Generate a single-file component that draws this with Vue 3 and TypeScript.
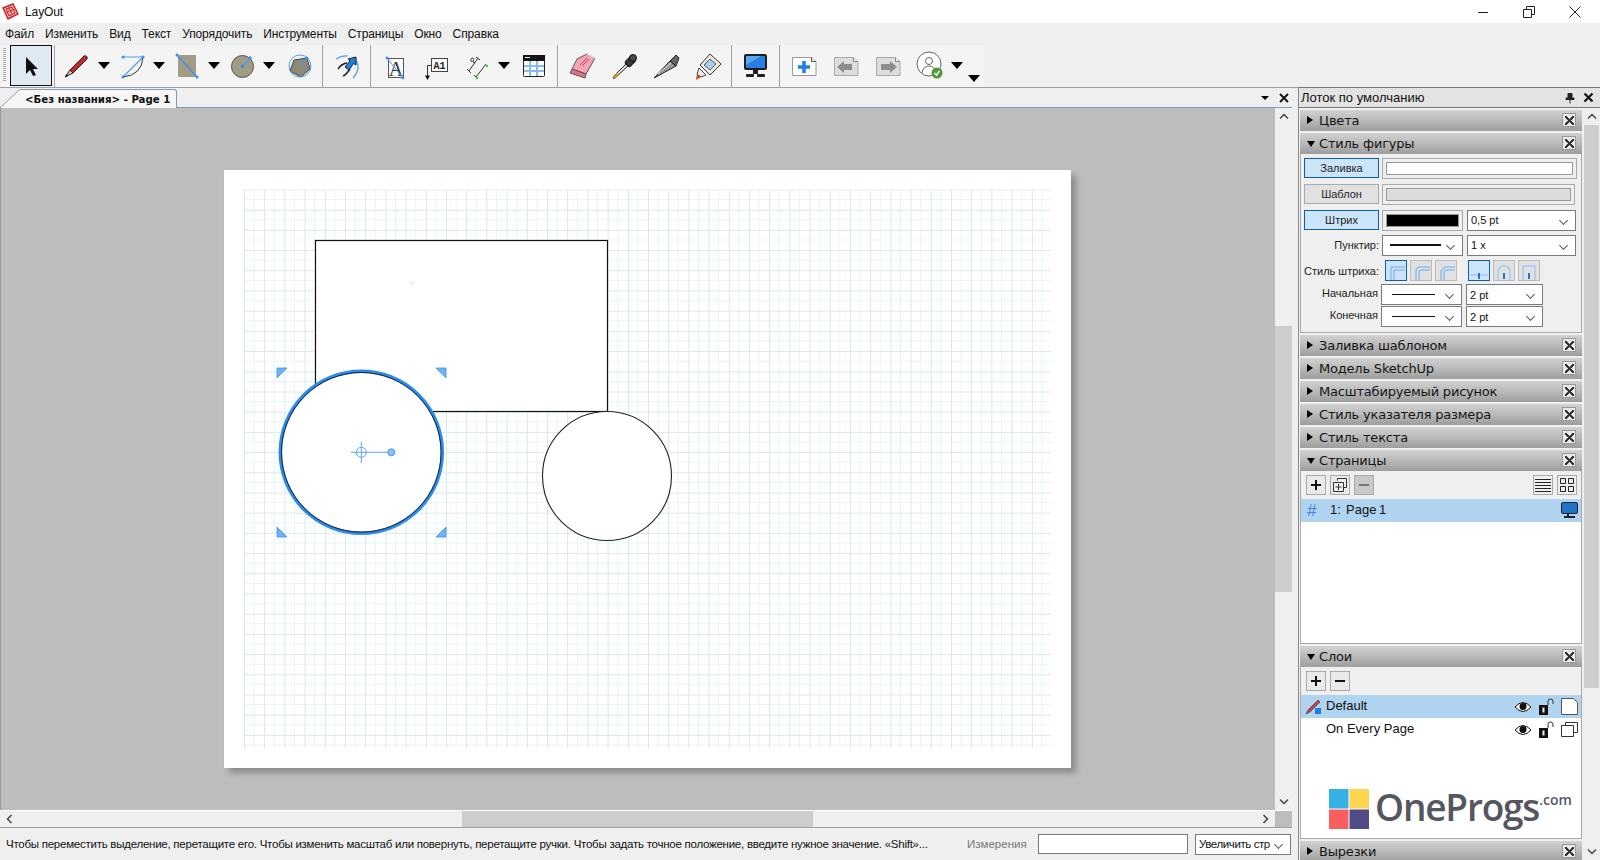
<script setup lang="ts">
const menu = ['Файл', 'Изменить', 'Вид', 'Текст', 'Упорядочить', 'Инструменты', 'Страницы', 'Окно', 'Справка']
const midPanels = ['Заливка шаблоном', 'Модель SketchUp', 'Масштабируемый рисунок', 'Стиль указателя размера', 'Стиль текста']

// stroke join and cap buttons of the shape style panel
const joins = [
  { d: 'M20 7H6V20M20 10H9V20', active: true },
  { d: 'M20 7H10Q6 7 6 11V20M20 10H11Q9 10 9 12V20', active: false },
  { d: 'M20 7H10L6 11V20M20 10H11L9 12V20', active: false },
]
const caps = [
  { d: 'M2 15H20', active: true },
  { d: 'M5 20V12Q5 6 11 6Q17 6 17 12V20', active: false },
  { d: 'M5 20V6H17V20', active: false },
]
// selection handles, in page coordinates
const handles = [
  { id: 'tl', points: '53,198 63,198 53,208' },
  { id: 'tr', points: '212,198 222,198 222,208' },
  { id: 'bl', points: '53,357 53,367 63,367' },
  { id: 'br', points: '222,357 222,367 212,367' },
]
</script>

<template>
  <div class="app">
    <header class="titlebar">
      <svg class="app-icon" width="17" height="17" viewBox="0 0 17 17">
        <path d="M1 5L11 1L16 11L6 16Z" fill="#e9a9a9" stroke="#c5262c" stroke-width="1.4" />
        <path d="M4 6L10 4L13 10L7 13ZM7 4.500L10 11M4.500 9L12 6.500" fill="none" stroke="#c5262c" />
      </svg>
      <span class="app-name">LayOut</span>
      <div class="win-buttons">
        <svg width="12" height="12" viewBox="0 0 12 12"><path d="M1 6.500H11" stroke="#222" /></svg>
        <svg width="12" height="12" viewBox="0 0 12 12"><path d="M.5 3.500H8.500V11.500H.5ZM3.500 3.500V.5H11.500V8.500H8.500" fill="none" stroke="#222" /></svg>
        <svg width="12" height="12" viewBox="0 0 12 12"><path d="M.5 .5L11.500 11.500M11.500 .5L.5 11.500" stroke="#222" /></svg>
      </div>
    </header>

    <nav class="menubar">
      <span v-for="item in menu" :key="item">{{ item }}</span>
    </nav>

    <div class="toolbar-row">
      <div class="toolbar">
        <div class="grip"></div>
        <div class="select-tool">
          <svg width="20" height="24" viewBox="0 0 20 24"><path d="M5 3V20L9 16L12 22L15 21L12 15H17Z" fill="#111" /></svg>
        </div>
        <div class="sep"></div>

        <div class="group draw-group">
          <div class="pair">
            <div class="tool">
              <svg width="32" height="32" viewBox="0 0 32 32">
                <path d="M9 20L23 6C25 5 27 7 26 9L12 23Z" fill="#c8282c" stroke="#222" />
                <path d="M9 20L12 23L4 27Z" fill="#d8c49c" stroke="#222" />
                <path d="M4 27L6 24L7 26Z" fill="#111" />
              </svg>
            </div>
            <span class="drop"></span>
          </div>
          <div class="pair">
            <div class="tool">
              <svg width="32" height="32" viewBox="0 0 32 32">
                <path d="M27 7Q26 25 7 27" fill="none" stroke="#333" />
                <path d="M7 7H27L7 27" fill="none" stroke="#4a9ef0" stroke-width="1.200" />
                <circle cx="7" cy="7" r="1.500" fill="#3a90ee" /><circle cx="27" cy="7" r="1.500" fill="#3a90ee" /><circle cx="7" cy="27" r="1.500" fill="#3a90ee" />
              </svg>
            </div>
            <span class="drop"></span>
          </div>
          <div class="pair">
            <div class="tool">
              <svg width="32" height="32" viewBox="0 0 32 32">
                <rect x="7" y="5" width="18" height="22" rx="1" fill="#a09c86" />
                <path d="M6 5L26 27" stroke="#3a90ee" stroke-width="1.200" />
                <circle cx="6" cy="5" r="1.500" fill="#3a90ee" /><circle cx="26" cy="27" r="1.500" fill="#3a90ee" />
              </svg>
            </div>
            <span class="drop"></span>
          </div>
          <div class="pair">
            <div class="tool">
              <svg width="32" height="32" viewBox="0 0 32 32">
                <circle cx="16.500" cy="16.500" r="11" fill="#a09c86" stroke="#555" />
                <path d="M16.500 16.500L24 8" stroke="#4a9ef0" stroke-width="1.400" />
                <circle cx="16.500" cy="16.500" r="1.700" fill="#3a90ee" /><circle cx="24" cy="8" r="1.700" fill="#3a90ee" />
              </svg>
            </div>
            <span class="drop"></span>
          </div>
          <div class="tool polygon-tool">
            <svg width="32" height="32" viewBox="0 0 32 32">
              <path d="M10 10L23 8L26 19L17 27L6 21Z" fill="#8c8a78" stroke="#444" />
              <circle cx="16" cy="16" r="11" fill="none" stroke="#4a9ef0" />
              <path d="M16 16L23 8" stroke="#4a9ef0" />
              <circle cx="23" cy="8" r="1.500" fill="#3a90ee" />
            </svg>
          </div>
        </div>
        <div class="sep"></div>

        <div class="group rotate-group">
          <div class="tool">
            <svg width="32" height="32" viewBox="0 0 32 32">
              <path d="M5 9Q11 5 17 6M24 9Q31 18 22 28" fill="none" stroke="#4a9ef0" stroke-width="1.200" />
              <path d="M7 19Q10 14 16 13M12 26Q15 25 19 19" fill="none" stroke="#222" stroke-width="1.500" />
              <path d="M14 17L19 11L17 9L25 7L25 15L22.500 13.500L18 20Z" fill="#1f80de" stroke="#123" />
            </svg>
          </div>
        </div>
        <div class="sep"></div>

        <div class="group insert-group">
          <div class="tool">
            <svg width="32" height="32" viewBox="0 0 32 32">
              <rect x="9.500" y="8.500" width="15" height="19" fill="#fafafa" stroke="#555" />
              <text x="17" y="26" text-anchor="middle" class="glyph-a">A</text>
              <path d="M8 8L24 28" stroke="#4a9ef0" />
              <circle cx="8" cy="8" r="1.400" fill="#3a90ee" /><circle cx="24" cy="28" r="1.400" fill="#3a90ee" />
            </svg>
          </div>
          <div class="tool">
            <svg width="32" height="32" viewBox="0 0 32 32">
              <rect x="11.500" y="8.500" width="16" height="13" fill="#fafafa" stroke="#444" />
              <text x="19.500" y="18.500" text-anchor="middle" class="glyph-label">A1</text>
              <path d="M11 15.500H7.500V26" fill="none" stroke="#333" />
              <path d="M5 25.500H10L7.500 30Z" fill="#111" />
            </svg>
          </div>
          <div class="pair">
            <div class="tool">
              <svg width="32" height="32" viewBox="0 0 32 32">
                <path d="M8 21L17 8M15 27L25 14M6 19L10 23M13 25L17 29M15 7L19 10" fill="none" stroke="#333" />
                <path d="M11 12Q8 9 11 8Q14 8 12 11Q11 12 14 13" fill="none" stroke="#333" />
                <circle cx="26" cy="16" r="1.200" fill="#4fc04f" /><circle cx="16" cy="28" r="1.200" fill="#4fc04f" />
              </svg>
            </div>
            <span class="drop"></span>
          </div>
          <div class="tool table-tool">
            <svg width="24" height="24" viewBox="0 0 24 24">
              <rect x="1.500" y="1.500" width="21" height="21" rx="1" fill="#fff" stroke="#222" />
              <rect x="1" y="1" width="22" height="6" fill="#151515" />
              <rect x="3" y="3" width="5" height="1" fill="#fff" />
              <path d="M8 7V22M15 7V22M2 12H22M2 17H22" stroke="#8ab8f2" stroke-width="2" />
            </svg>
          </div>
        </div>
        <div class="sep"></div>

        <div class="group modify-group">
          <div class="tool">
            <svg width="32" height="32" viewBox="0 0 32 32">
              <path d="M11 9L21 4L29 8L20 24L6 19Z" fill="#f7a3b6" stroke="#555" />
              <path d="M6 19L20 24L19 28L4 23Z" fill="#e4708c" stroke="#555" />
              <path d="M21 4L29 8" stroke="#fff" />
              <path d="M14 15L21 8M16 16L23 9" stroke="#a55" />
            </svg>
          </div>
          <div class="tool">
            <svg width="32" height="32" viewBox="0 0 32 32">
              <path d="M20 12L5 27L6 29L22 14" fill="#e8e2cc" stroke="#222" />
              <path d="M5 27L9 23L10 25L6 29Z" fill="#e3a41d" />
              <rect x="19" y="6" width="7" height="10" rx="2" transform="rotate(45 22 11)" fill="#3a3a38" stroke="#111" />
              <circle cx="25" cy="8" r="3.500" fill="#4a4a46" stroke="#111" />
            </svg>
          </div>
          <div class="tool">
            <svg width="32" height="32" viewBox="0 0 32 32">
              <path d="M4 28L20 11L26 16Z" fill="#999" stroke="#222" />
              <path d="M20 11L26 5L29 8L26 16Z" fill="#666" stroke="#222" />
              <path d="M8 24L21 13" stroke="#ddd" />
            </svg>
          </div>
          <div class="tool">
            <svg width="32" height="32" viewBox="0 0 32 32">
              <path d="M18 4L29 14L18 25L8 15Z" fill="#f1ecd9" stroke="#333" />
              <path d="M18 9L24 14L18 20L12 15Z" fill="#a6cdec" stroke="#557" />
              <path d="M7 18L14 25L9 27L5 24Z" fill="#eee" stroke="#444" />
              <path d="M5 24L9 27L4 30Z" fill="#d9401f" />
            </svg>
          </div>
        </div>
        <div class="sep"></div>

        <div class="group present-group">
          <div class="tool">
            <svg width="26" height="26" viewBox="0 0 26 26">
              <rect x="1" y="1" width="23" height="16" rx="2" fill="#1f1f1f" />
              <rect x="3" y="3" width="19" height="12" fill="#2a7ee0" />
              <path d="M3 3H18L3 12Z" fill="#5ea7f0" />
              <rect x="10" y="17" width="5" height="4" fill="#1f1f1f" />
              <rect x="3" y="21" width="8" height="3" rx="1" fill="#1f1f1f" /><rect x="14" y="21" width="8" height="3" rx="1" fill="#1f1f1f" />
            </svg>
          </div>
        </div>
        <div class="sep"></div>

        <div class="group page-group">
          <div class="tool">
            <svg width="28" height="24" viewBox="0 0 28 24">
              <path d="M2.500 3.500H21.500L26 7.500V21.500H2.500Z" fill="#fff" stroke="#999" />
              <path d="M21.500 3.500V7.500H26" fill="#eee" stroke="#555" />
              <path d="M14 7V19M8 13H20" stroke="#1d7fe0" stroke-width="3.500" />
            </svg>
          </div>
          <div class="tool">
            <svg width="28" height="24" viewBox="0 0 28 24">
              <path d="M2.500 3.500H21.500L26 7.500V21.500H2.500Z" fill="#ddd" stroke="#aaa" />
              <path d="M21.500 3.500V7.500H26" fill="#eee" stroke="#888" />
              <path d="M5 13L12 7V10H20V16H12V19Z" fill="#8d8d8d" />
            </svg>
          </div>
          <div class="tool">
            <svg width="28" height="24" viewBox="0 0 28 24">
              <path d="M2.500 3.500H21.500L26 7.500V21.500H2.500Z" fill="#ddd" stroke="#aaa" />
              <path d="M21.500 3.500V7.500H26" fill="#eee" stroke="#888" />
              <path d="M23 13L16 7V10H7V16H16V19Z" fill="#8d8d8d" />
            </svg>
          </div>
          <div class="pair user-pair">
            <div class="tool">
              <svg width="32" height="32" viewBox="0 0 32 32">
                <circle cx="15" cy="14" r="12" fill="#fff" stroke="#666" />
                <circle cx="15" cy="11" r="3.500" fill="#fff" stroke="#666" />
                <path d="M8 23Q9 16 15 16Q21 16 22 23" fill="none" stroke="#666" />
                <circle cx="23" cy="23" r="5.500" fill="#4f9a36" />
                <path d="M20.500 23L22.500 25L25.500 21" fill="none" stroke="#fff" stroke-width="1.500" />
              </svg>
            </div>
            <span class="drop"></span>
          </div>
          <span class="drop overflow-drop"></span>
        </div>
      </div>
    </div>

    <main class="main">
      <section class="workspace">
        <div class="tabs">
          <div class="tab">
            <svg class="tab-slant" width="22" height="19" viewBox="0 0 22 19"><path d="M0 19L19 1Q20 .5 22 .5V19Z" fill="#f6f6f6" /><path d="M0 19L19 1Q20 .5 22 .5" fill="none" stroke="#7f9db9" /></svg>
            <span class="tab-label">&lt;Без названия&gt; - Page 1</span>
          </div>
          <div class="tab-controls">
            <span class="tri-small"></span>
            <svg width="10" height="10" viewBox="0 0 10 10"><path d="M1 1L9 9M9 1L1 9" stroke="#111" stroke-width="1.800" /></svg>
          </div>
        </div>

        <div class="view-row">
          <div class="canvas">
            <div class="page">
              <svg width="847" height="598" viewBox="0 0 847 598">
                <defs>
                  <pattern id="grid" x="20" y="19.500" width="20.200" height="20.200" patternUnits="userSpaceOnUse">
                    <path d="M10.100 0V20.200M0 10.100H20.200" stroke="#e6f5f6" stroke-width="1" />
                    <path d="M.5 0V20.200M0 .5H20.200" stroke="#d9e8e8" stroke-width="1" />
                  </pattern>
                </defs>
                <rect x="20" y="19.500" width="807" height="559" fill="url(#grid)" />
                <rect x="91.500" y="70.500" width="292" height="171" fill="#fff" stroke="#111" stroke-width="1.200" />
                <path d="M186 112L190 115M190 112L186 115" stroke="#e4e4e4" />
                <circle cx="383" cy="306" r="64.500" fill="#fff" stroke="#222" stroke-width="1.100" />
                <circle cx="137.300" cy="282.300" r="81" fill="#fff" stroke="#2a8cf0" stroke-width="3.500" />
                <circle cx="137.300" cy="282.300" r="79.800" fill="none" stroke="#222" stroke-width="1" />
                <polygon v-for="h in handles" :key="h.id" :points="h.points" fill="#6fb2f5" stroke="#3d93ec" stroke-width=".8" />
                <g fill="none" stroke="#5da5ee">
                  <circle cx="137.300" cy="282.300" r="5" />
                  <path d="M127 282.300H167M137.300 272V293" />
                </g>
                <circle cx="167.300" cy="282.300" r="3.500" fill="#8cc0f5" stroke="#4a9aec" />
              </svg>
            </div>
          </div>
          <div class="vscroll">
            <svg class="arrow" width="10" height="7" viewBox="0 0 10 7"><path d="M1 5.500L5 1.500L9 5.500" fill="none" stroke="#444" stroke-width="1.500" /></svg>
            <div class="vtrack"><div class="vthumb"></div></div>
            <svg class="arrow" width="10" height="7" viewBox="0 0 10 7"><path d="M1 1.500L5 5.500L9 1.500" fill="none" stroke="#444" stroke-width="1.500" /></svg>
          </div>
        </div>

        <div class="hscroll-row">
          <div class="hscroll">
            <svg width="7" height="10" viewBox="0 0 7 10"><path d="M5.500 1L1.500 5L5.500 9" fill="none" stroke="#444" stroke-width="1.500" /></svg>
            <div class="htrack"><div class="hthumb"></div></div>
            <svg width="7" height="10" viewBox="0 0 7 10"><path d="M1.500 1L5.500 5L1.500 9" fill="none" stroke="#444" stroke-width="1.500" /></svg>
          </div>
          <div class="scroll-corner"></div>
        </div>

        <footer class="statusbar">
          <span class="hint">Чтобы переместить выделение, перетащите его. Чтобы изменить масштаб или повернуть, перетащите ручки. Чтобы задать точное положение, введите нужное значение. «Shift»...</span>
          <span class="measure-label">Измерения</span>
          <div class="measure-input"></div>
          <div class="combo zoom-combo"><span>Увеличить стр</span></div>
        </footer>
      </section>

      <aside class="tray">
        <div class="tray-title">
          <span>Лоток по умолчанию</span>
          <svg width="10" height="12" viewBox="0 0 10 12"><path d="M3 1.500H7V6H9V7.500H1V6H3ZM5 7.500V11.500" fill="#222" stroke="#222" /></svg>
          <svg width="11" height="11" viewBox="0 0 11 11"><path d="M1.500 1.500L9.500 9.500M9.500 1.500L1.500 9.500" stroke="#111" stroke-width="2.200" /></svg>
        </div>

        <div class="tray-body">
          <div class="panels">
            <div class="panel-head closed"><span class="panel-name">Цвета</span><span class="panel-x"></span></div>

            <div class="panel">
              <div class="panel-head open"><span class="panel-name">Стиль фигуры</span><span class="panel-x"></span></div>
              <div class="shape-style">
                <div class="row">
                  <button class="swatch-btn on">Заливка</button>
                  <div class="well fill-well"><div class="well-fill white"></div></div>
                </div>
                <div class="row">
                  <button class="swatch-btn">Шаблон</button>
                  <div class="well pattern-well"><div class="well-fill grey"></div></div>
                </div>
                <div class="row">
                  <button class="swatch-btn on">Штрих</button>
                  <div class="well stroke-well"><div class="well-fill black"></div></div>
                  <div class="combo wide"><span>0,5 pt</span></div>
                </div>
                <div class="row">
                  <label class="row-label">Пунктир:</label>
                  <div class="combo line-combo"><i class="line thick"></i></div>
                  <div class="combo wide"><span>1 x</span></div>
                </div>
                <div class="row stroke-row">
                  <label class="row-label">Стиль штриха:</label>
                  <div class="stroke-buttons">
                    <span v-for="j in joins" :key="j.d" class="stroke-btn" :class="{ on: j.active }">
                      <svg width="22" height="21" viewBox="0 0 22 21"><path :d="j.d" fill="none" stroke="#8fbdf0" stroke-width="1.500" /></svg>
                    </span>
                  </div>
                  <div class="stroke-buttons caps">
                    <span v-for="c in caps" :key="c.d" class="stroke-btn" :class="{ on: c.active }">
                      <svg width="22" height="21" viewBox="0 0 22 21">
                        <path :d="c.d" fill="none" stroke="#a8c8ee" stroke-width="1.500" />
                        <path d="M11 13V19" stroke="#2a6fc8" stroke-width="2" />
                      </svg>
                    </span>
                  </div>
                </div>
                <div class="row end-row">
                  <label class="row-label">Начальная</label>
                  <div class="combo line-combo"><i class="line"></i></div>
                  <div class="combo small"><span>2 pt</span></div>
                </div>
                <div class="row end-row">
                  <label class="row-label">Конечная</label>
                  <div class="combo line-combo"><i class="line"></i></div>
                  <div class="combo small"><span>2 pt</span></div>
                </div>
              </div>
            </div>

            <div v-for="name in midPanels" :key="name" class="panel-head closed">
              <span class="panel-name">{{ name }}</span><span class="panel-x"></span>
            </div>

            <div class="panel pages-panel">
              <div class="panel-head open"><span class="panel-name">Страницы</span><span class="panel-x"></span></div>
              <div class="mini-bar">
                <span class="mini-btn"><svg width="12" height="12" viewBox="0 0 12 12"><path d="M6 1V11M1 6H11" stroke="#111" stroke-width="2" /></svg></span>
                <span class="mini-btn"><svg width="16" height="16" viewBox="0 0 16 16"><path d="M5.500 3.500V1.500H14.500V10.500H11.500M1.500 5.500H11.500V14.500H1.500Z" fill="#eee" stroke="#333" /><path d="M6.500 7V13M3.500 10H9.500" stroke="#333" /></svg></span>
                <span class="mini-btn off"><svg width="12" height="12" viewBox="0 0 12 12"><path d="M1 6H11" stroke="#777" stroke-width="2" /></svg></span>
                <span class="spacer"></span>
                <span class="mini-btn plain"><svg width="16" height="15" viewBox="0 0 16 15"><path d="M0 1.500H16M0 4.500H16M0 7.500H16M0 10.500H16M0 13.500H16" stroke="#222" /></svg></span>
                <span class="mini-btn plain"><svg width="16" height="16" viewBox="0 0 16 16"><path d="M1.500 1.500H6.500V6.500H1.500ZM9.500 1.500H14.500V6.500H9.500ZM1.500 9.500H6.500V14.500H1.500ZM9.500 9.500H14.500V14.500H9.500Z" fill="none" stroke="#222" /></svg></span>
              </div>
              <div class="list pages-list">
                <div class="list-row selected">
                  <span class="hash">#</span>
                  <span class="page-label">1:&nbsp; Page 1</span>
                  <svg class="row-monitor" width="17" height="17" viewBox="0 0 17 17">
                    <rect x=".5" y=".5" width="16" height="11" rx="1.500" fill="#1e74c8" stroke="#222" />
                    <path d="M7 12V14M3 15H14" stroke="#222" stroke-width="2" />
                  </svg>
                </div>
              </div>
            </div>

            <div class="panel layers-panel">
              <div class="panel-head open"><span class="panel-name">Слои</span><span class="panel-x"></span></div>
              <div class="mini-bar">
                <span class="mini-btn"><svg width="12" height="12" viewBox="0 0 12 12"><path d="M6 1V11M1 6H11" stroke="#111" stroke-width="2" /></svg></span>
                <span class="mini-btn"><svg width="12" height="12" viewBox="0 0 12 12"><path d="M1 6H11" stroke="#111" stroke-width="2" /></svg></span>
              </div>
              <div class="list layers-list">
                <div class="list-row selected layer">
                  <svg class="layer-pen" width="18" height="16" viewBox="0 0 18 16">
                    <path d="M1 15L3 11L13 1L15 3L5 13Z" fill="#c5433f" stroke="#444" stroke-width=".7" />
                    <rect x="10" y="9" width="6" height="6" fill="#1f7fe8" />
                  </svg>
                  <span class="layer-name">Default</span>
                  <svg class="eye" width="18" height="12" viewBox="0 0 18 12"><path d="M1 6Q9 -3 17 6Q9 15 1 6Z" fill="#fff" stroke="#111" /><circle cx="9" cy="5.500" r="3.500" fill="#111" /></svg>
                  <svg class="lock" width="16" height="18" viewBox="0 0 16 18"><rect x="0" y="7" width="9" height="10" fill="#111" /><rect x="3.500" y="9.500" width="2" height="5" fill="#eee" /><path d="M9 7V3Q9 1 11.500 1Q14 1 14 3V6" fill="none" stroke="#333" /></svg>
                  <svg class="layer-page" width="17" height="17" viewBox="0 0 17 17"><path d="M.5 .5H12.500L16.500 4.500V16.500H.5Z" fill="#fff" stroke="#555" /></svg>
                </div>
                <div class="list-row layer">
                  <span class="layer-pen"></span>
                  <span class="layer-name">On Every Page</span>
                  <svg class="eye" width="18" height="12" viewBox="0 0 18 12"><path d="M1 6Q9 -3 17 6Q9 15 1 6Z" fill="#fff" stroke="#111" /><circle cx="9" cy="5.500" r="3.500" fill="#111" /></svg>
                  <svg class="lock" width="16" height="18" viewBox="0 0 16 18"><rect x="0" y="7" width="9" height="10" fill="#111" /><rect x="3.500" y="9.500" width="2" height="5" fill="#eee" /><path d="M9 7V3Q9 1 11.500 1Q14 1 14 3V6" fill="none" stroke="#333" /></svg>
                  <svg class="layer-page" width="17" height="15" viewBox="0 0 17 15"><path d="M4.500 3.500V.5H16.500V10.500H12.500M.5 3.500H12.500V14.500H.5Z" fill="#fff" stroke="#333" /></svg>
                </div>
                <div class="watermark">
                  <svg width="40" height="40" viewBox="0 0 40 40">
                    <rect width="19.500" height="19.500" fill="#35b1e6" />
                    <rect x="20.500" width="19.500" height="19.500" fill="#fdd54e" />
                    <rect y="20.500" width="19.500" height="19.500" fill="#fa5f5f" />
                    <rect x="20.500" y="20.500" width="19.500" height="19.500" fill="#4f4c86" />
                  </svg>
                  <span class="wm-name">OneProgs</span><span class="wm-com">.com</span>
                </div>
              </div>
            </div>

            <div class="panel-head closed"><span class="panel-name">Вырезки</span><span class="panel-x"></span></div>
          </div>

          <div class="tray-scroll">
            <svg class="arrow" width="10" height="7" viewBox="0 0 10 7"><path d="M1 5.500L5 1.500L9 5.500" fill="none" stroke="#444" stroke-width="1.500" /></svg>
            <div class="tray-track"><div class="tray-thumb"></div></div>
            <svg class="arrow" width="10" height="7" viewBox="0 0 10 7"><path d="M1 1.500L5 5.500L9 1.500" fill="none" stroke="#444" stroke-width="1.500" /></svg>
          </div>
        </div>
      </aside>
    </main>
  </div>
</template>

<style>
html,
body {
  margin: 0;
  overflow: hidden;
}
</style>

<style scoped>
.app {
  width: 1600px;
  height: 860px;
  display: flex;
  flex-direction: column;
  overflow: hidden;
  background: #efefef;
  color: #111;
  font-family: "Liberation Sans", "Noto Sans", sans-serif;
  font-size: 12px;
}

/* Title bar */
.titlebar {
  height: 23px;
  flex: none;
  display: flex;
  align-items: center;
  background: #fff;
}

.app-icon {
  margin-left: 2px;
}

.app-name {
  margin-left: 6px;
  letter-spacing: -0.1px;
}

.win-buttons {
  margin-left: auto;
  display: flex;
  gap: 34px;
  padding-right: 19px;
}

/* Menu */
.menubar {
  height: 22px;
  flex: none;
  display: flex;
  align-items: center;
  gap: 11px;
  padding-left: 5px;
  letter-spacing: -0.12px;
}

/* Toolbar */
.toolbar-row {
  height: 43px;
  flex: none;
  border-bottom: 1px solid #a0a0a0;
  box-sizing: border-box;
}

.toolbar {
  width: 984px;
  height: 42px;
  display: flex;
  background: #f4f4f4;
}

.grip {
  width: 3px;
  height: 34px;
  margin: 3px 0 0 3px;
  background: repeating-linear-gradient(#aaa 0 1px, transparent 1px 2px);
}

.select-tool {
  width: 40px;
  height: 39px;
  margin-left: 4px;
  display: flex;
  align-items: center;
  justify-content: center;
  border: 1px solid #111;
  background: #dfe9f3;
}

.sep {
  width: 1px;
  flex: none;
  margin-left: 2px;
  background: #a3a3a3;
}

.group {
  display: flex;
  align-items: center;
  height: 41px;
}

.tool {
  width: 36px;
  height: 41px;
  flex: none;
  display: flex;
  align-items: center;
  justify-content: center;
}

.glyph-a {
  font-family: "Liberation Serif", serif;
  font-size: 20px;
  fill: #333;
}

.glyph-label {
  font-family: "Liberation Mono", monospace;
  font-size: 10px;
  font-weight: 700;
  fill: #222;
}

.pair {
  display: flex;
  align-items: center;
}

.drop {
  width: 18px;
  height: 7px;
  flex: none;
  position: relative;
}

.drop::after {
  content: "";
  position: absolute;
  left: 3px;
  top: 0;
  border-left: 6px solid transparent;
  border-right: 6px solid transparent;
  border-top: 7px solid #000;
}

.draw-group {
  width: 266px;
  padding-left: 4px;
  gap: 1px;
  box-sizing: border-box;
}

.polygon-tool {
  margin-left: 3px;
}

.draw-group + .sep {
  margin-left: 1px;
}

.rotate-group {
  width: 47px;
  justify-content: center;
}

.rotate-group + .sep,
.insert-group + .sep,
.modify-group + .sep,
.present-group + .sep {
  margin-left: 0;
}

.insert-group {
  width: 186px;
  padding-left: 6px;
  gap: 5px;
  box-sizing: border-box;
}

.table-tool {
  margin-left: -2px;
}

.modify-group {
  width: 173px;
  padding-left: 6px;
  gap: 6px;
  box-sizing: border-box;
}

.present-group {
  width: 47px;
  justify-content: center;
}

.page-group {
  width: 204px;
  padding-left: 6px;
  gap: 6px;
  box-sizing: border-box;
  position: relative;
}

.overflow-drop {
  position: absolute;
  left: 185px;
  top: 30px;
}

/* Main area */
.main {
  flex: 1;
  min-height: 0;
  display: flex;
}

.workspace {
  width: 1292px;
  flex: none;
  display: flex;
  flex-direction: column;
}

.tabs {
  height: 20px;
  flex: none;
  display: flex;
  align-items: flex-end;
  border-bottom: 1px solid #7f9db9;
  box-sizing: border-box;
}

.tab {
  height: 19px;
  margin-bottom: -1px;
  display: flex;
  align-items: center;
}

.tab-slant {
  display: block;
  flex: none;
}

.tab-label {
  height: 19px;
  padding: 1px 6px 0 3px;
  display: flex;
  align-items: center;
  border: 1px solid #7f9db9;
  border-left: none;
  border-bottom: none;
  border-radius: 0 3px 0 0;
  background: #f6f6f6;
  font-family: "DejaVu Sans", sans-serif;
  font-size: 10.200px;
  font-weight: 700;
  box-sizing: border-box;
}

.tab-controls {
  margin-left: auto;
  margin-right: 3px;
  height: 19px;
  display: flex;
  align-items: center;
  gap: 10px;
}

.tri-small {
  border-left: 4px solid transparent;
  border-right: 4px solid transparent;
  border-top: 4px solid #000;
}

.view-row {
  flex: 1;
  min-height: 0;
  display: flex;
}

.canvas {
  flex: 1;
  min-width: 0;
  padding: 62px 0 0 223px;
  background: #bdbdbd;
  border-left: 1px solid #9a9a9a;
  box-sizing: border-box;
}

.page {
  width: 847px;
  height: 598px;
  background: #fff;
  box-shadow: 5px 5px 6px #8c8c8c;
}

.page svg {
  display: block;
}

.vscroll {
  width: 17px;
  flex: none;
  display: flex;
  flex-direction: column;
  align-items: center;
  background: #efefef;
}

.arrow {
  flex: none;
  margin: 5px 0;
}

.vtrack {
  flex: 1;
  width: 100%;
  padding-top: 201px;
  box-sizing: border-box;
}

.vthumb {
  height: 266px;
  background: #cdcdcd;
}

.hscroll-row {
  height: 18px;
  flex: none;
  display: flex;
  border-top: 1px solid #fff;
  border-bottom: 1px solid #a0a0a0;
  box-sizing: border-box;
}

.hscroll {
  flex: 1;
  display: flex;
  align-items: center;
  padding: 0 6px;
  background: #efefef;
}

.htrack {
  flex: 1;
  height: 100%;
  padding-left: 449px;
  box-sizing: border-box;
}

.hthumb {
  width: 351px;
  height: 100%;
  background: #cdcdcd;
}

.scroll-corner {
  width: 17px;
  background: #bdbdbd;
}

.statusbar {
  height: 32px;
  flex: none;
  display: flex;
  align-items: center;
  padding-left: 6px;
  white-space: nowrap;
}

.hint {
  width: 961px;
  flex: none;
  font-size: 11.500px;
  letter-spacing: -0.25px;
}

.measure-label {
  width: 71px;
  flex: none;
  font-size: 11.500px;
  color: #777;
}

.measure-input {
  width: 150px;
  height: 20px;
  flex: none;
  background: #fff;
  border: 1px solid #777;
  box-sizing: border-box;
}

/* Combos */
.combo {
  height: 21px;
  flex: none;
  position: relative;
  display: flex;
  align-items: center;
  padding-left: 3px;
  background: #fff;
  border: 1px solid #7a7a7a;
  box-sizing: border-box;
  font-size: 11px;
}

.combo::after {
  content: "";
  position: absolute;
  right: 8px;
  top: 6px;
  width: 6px;
  height: 6px;
  border-right: 1px solid #555;
  border-bottom: 1px solid #555;
  transform: rotate(45deg) scale(.9);
}

.zoom-combo {
  width: 96px;
  margin-left: 7px;
  font-size: 11.500px;
  letter-spacing: -0.4px;
}

.wide {
  width: 109px;
}

.small {
  width: 77px;
}

.line-combo {
  width: 81px;
}

.line {
  display: block;
  width: 43px;
  height: 1px;
  margin-left: 7px;
  background: #111;
}

.line.thick {
  width: 51px;
  height: 2px;
  margin-left: 4px;
}

/* Tray */
.tray {
  width: 302px;
  flex: none;
  margin: -1px 0 0 6px;
  display: flex;
  flex-direction: column;
  border-left: 1px solid #888;
  box-sizing: border-box;
}

.tray-title {
  height: 19px;
  flex: none;
  display: flex;
  align-items: center;
  gap: 8px;
  padding: 0 6px 0 2px;
  background: #e3e3e3;
  border-top: 1px solid #777;
  border-bottom: 1px solid #777;
  font-size: 13px;
}

.tray-title span {
  flex: 1;
}

.tray-body {
  flex: 1;
  min-height: 0;
  display: flex;
  overflow: hidden;
}

.panels {
  width: 283px;
  flex: none;
  padding: 2px 0 0 1px;
  box-sizing: border-box;
  display: flex;
  flex-direction: column;
  gap: 2px;
  margin-right: 2px;
}

.panel {
  border: 1px solid #aaa;
  border-top: none;
  box-sizing: border-box;
}

.panel-head {
  height: 21px;
  flex: none;
  position: relative;
  display: flex;
  align-items: center;
  padding-left: 19px;
  background: linear-gradient(#d2d2d2, #b9b9b9 50%, #9d9d9d);
  box-sizing: border-box;
}

.panel > .panel-head {
  margin: 0 -1px;
}

.panel-head::before {
  content: "";
  position: absolute;
  left: 7px;
  top: 6px;
}

.closed::before {
  border-top: 4px solid transparent;
  border-bottom: 4px solid transparent;
  border-left: 6px solid #000;
}

.open::before {
  top: 8px;
  border-left: 4px solid transparent;
  border-right: 4px solid transparent;
  border-top: 6px solid #000;
}

.panel-name {
  font-family: "DejaVu Sans", sans-serif;
  font-size: 13px;
  letter-spacing: -0.2px;
  color: #151515;
}

.panel-x {
  position: absolute;
  right: 6px;
  top: 3px;
  width: 14px;
  height: 14px;
  background-color: #e8e8e8;
  background-image: linear-gradient(45deg, transparent 44%, #333 44% 56%, transparent 56%), linear-gradient(-45deg, transparent 44%, #333 44% 56%, transparent 56%);
  background-size: 9px 9px;
  background-position: center;
  background-repeat: no-repeat;
  border: 1px solid #999;
  box-sizing: border-box;
}

/* Shape style panel */
.shape-style {
  height: 178px;
  padding: 4px 0 0 3px;
  box-sizing: border-box;
  background: #efefef;
  display: flex;
  flex-direction: column;
}

.row {
  height: 20px;
  flex: none;
  display: flex;
  align-items: center;
  gap: 3px;
  margin-top: 5px;
}

.row:first-child {
  margin-top: 0;
}

.row:nth-child(2),
.row:nth-child(3) {
  margin-top: 6px;
}

.swatch-btn {
  width: 75px;
  height: 20px;
  padding: 0;
  flex: none;
  border: 1px solid #aaa;
  background: #e1e1e1;
  color: #222;
  font: inherit;
  font-size: 11px;
}

.swatch-btn.on {
  border-color: #0f5f9e;
  background: #cce4f7;
}

.well {
  height: 21px;
  padding: 3px;
  flex: none;
  border: 1px solid #aaa;
  box-sizing: border-box;
}

.fill-well {
  width: 195px;
}

.pattern-well {
  width: 193px;
}

.stroke-well {
  width: 81px;
}

.well + .combo {
  margin-left: 1px;
}

.well-fill {
  height: 100%;
  border: 1px solid #999;
  box-sizing: border-box;
}

.white {
  background: #fff;
}

.grey {
  background: #dcdcdc;
}

.black {
  background: #000;
}

.row-label {
  width: 75px;
  flex: none;
  text-align: right;
  font-size: 11px;
  color: #222;
  white-space: nowrap;
}

.line-combo + .combo {
  margin-left: 1px;
}

.stroke-row {
  height: 21px;
}

.stroke-buttons {
  display: flex;
  gap: 3px;
  margin-left: 3px;
}

.stroke-buttons.caps {
  margin-left: 8px;
}

.stroke-btn {
  width: 22px;
  height: 21px;
  border: 1px solid #bbb;
  background: #e1e1e1;
  box-sizing: border-box;
  overflow: hidden;
}

.stroke-btn svg {
  display: block;
  margin: -1px;
}

.stroke-btn.on {
  border-color: #0f5f9e;
  background: #cce4f7;
}

.end-row {
  margin-top: 1px;
  height: 21px;
}

.row.stroke-row + .end-row {
  margin-top: 3px;
}

.end-row .row-label {
  width: 74px;
  margin-top: -4px;
}

/* Pages and layers */
.pages-panel {
  flex: none;
}

.mini-bar {
  height: 28px;
  display: flex;
  align-items: center;
  gap: 4px;
  padding: 0 4px 0 5px;
  background: #efefef;
  box-sizing: border-box;
}

.mini-btn {
  width: 20px;
  height: 20px;
  display: flex;
  align-items: center;
  justify-content: center;
  border: 1px solid #aaa;
  background: #e9e9e9;
  box-sizing: border-box;
}

.mini-btn.off {
  background: #c8c8c8;
}

.mini-btn.plain {
  background: #efefef;
}

.spacer {
  flex: 1;
}

.list {
  background: #fff;
}

.pages-list {
  height: 144px;
}

.list-row {
  height: 23px;
  display: flex;
  align-items: center;
  font-size: 13px;
}

.list-row > span {
  padding-bottom: 3px;
}

.selected {
  background: #b0d4f0;
}

.list-row .hash {
  width: 29px;
  flex: none;
  padding: 0 0 0 6px;
  box-sizing: border-box;
  color: #4a82d8;
  font-size: 17px;
}

.page-label {
  flex: 1;
  word-spacing: -1px;
}

.row-monitor {
  margin-right: 3px;
}

.layers-panel {
  flex: none;
}

.layers-list {
  height: 143px;
  position: relative;
}

.layer-pen {
  width: 18px;
  margin: 0 3px 0 4px;
  flex: none;
}

.layer-name {
  flex: 1;
}

.eye {
  margin-right: 7px;
}

.lock {
  margin-right: 6px;
}

.layer-page {
  margin-right: 3px;
}

.watermark {
  position: absolute;
  left: 28px;
  top: 94px;
  display: flex;
  align-items: flex-start;
  font-family: "Open Sans", sans-serif;
}

.wm-name {
  margin-left: 6px;
  font-size: 37px;
  font-weight: 600;
  line-height: 36px;
  letter-spacing: -1.200px;
  color: #55565f;
}

.wm-com {
  font-size: 14px;
  font-weight: 600;
  line-height: 22px;
  color: #55565f;
}

.tray-scroll {
  width: 15px;
  flex: none;
  display: flex;
  flex-direction: column;
  align-items: center;
  background: #efefef;
}

.tray-track {
  flex: 1;
  width: 100%;
}

.tray-thumb {
  height: 563px;
  background: #cdcdcd;
}
</style>
